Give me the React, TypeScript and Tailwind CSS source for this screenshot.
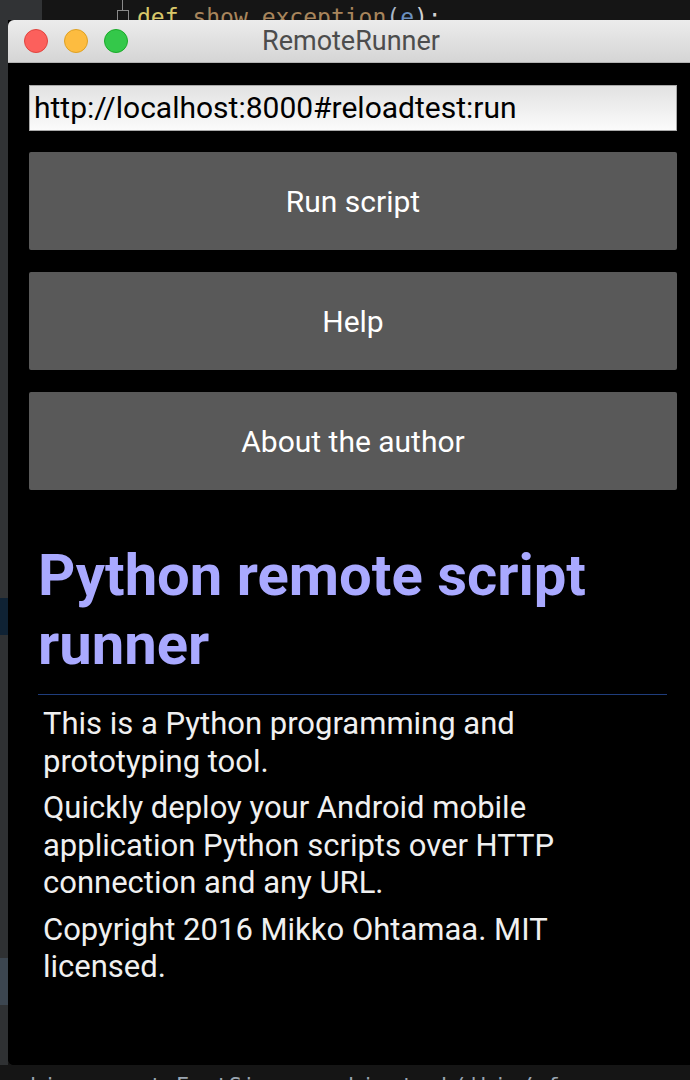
import React from "react";

const paragraphs = [
  "This is a Python programming and prototyping tool.",
  "Quickly deploy your Android mobile application Python scripts over HTTP connection and any URL.",
  "Copyright 2016 Mikko Ohtamaa. MIT licensed.",
];

const buttons = ["Run script", "Help", "About the author"];

function TitleBar() {
  return (
    <div className="relative h-[43px] shrink-0 rounded-t-[6px] border-b border-[#b4b4b4] bg-gradient-to-b from-[#ececec] to-[#d5d5d5] flex items-center">
      <div className="flex items-center gap-[16px] pl-[16px]">
        <span className="block w-[24px] h-[24px] rounded-full bg-[#fc605c] border border-[#e0443e]" />
        <span className="block w-[24px] h-[24px] rounded-full bg-[#fdbc40] border border-[#dea123]" />
        <span className="block w-[24px] h-[24px] rounded-full bg-[#34c84a] border border-[#1aab29]" />
      </div>
      <div className="absolute inset-0 flex items-center justify-center pr-[4px] text-[27px] text-[#4d4d4d] font-['Roboto',sans-serif]">
        RemoteRunner
      </div>
    </div>
  );
}

function RunnerContent() {
  return (
    <div className="flex-1 bg-black pt-[22px] pl-[21px] font-['Roboto',sans-serif]">
      <div className="w-[648px] h-[46px] border border-[#a9a9a9] bg-gradient-to-b from-[#e2e2e2] to-[#fbfbfb] pl-[4px] flex items-center text-[30px] text-black leading-none">
        http://localhost:8000#reloadtest:run
      </div>
      <div className="mt-[21px] flex flex-col gap-[22px] w-[648px]">
        {buttons.map((b) => (
          <div
            key={b}
            className="h-[98px] rounded-[2px] bg-[#595959] flex items-center justify-center text-[30px] text-white"
          >
            {b}
          </div>
        ))}
      </div>
      <h1 className="mt-[51px] ml-[9px] w-[620px] text-[58px] leading-[69px] font-bold text-[#a9a9ff]">
        Python remote script runner
      </h1>
      <div className="mt-[15px] ml-[9px] w-[629px] h-px bg-[#1f3d7c]" />
      <div className="mt-[10px] ml-[14px] w-[590px] flex flex-col gap-[9px]">
        {paragraphs.map((p) => (
          <p key={p} className="text-[31px] leading-[37.5px] text-[#f0f0f0]">
            {p}
          </p>
        ))}
      </div>
    </div>
  );
}

export default function App() {
  return (
    <div className="w-[690px] h-[1080px] overflow-hidden bg-[#151515] flex flex-col">
      {/* editor line above the window */}
      <div className="h-[20px] shrink-0 flex overflow-hidden">
        <div className="w-[42px] bg-[#313335]" />
        <div className="relative flex-1">
          <div className="absolute left-[80px] top-0 w-px h-[10px] bg-[#8a8a8a]" />
          <div className="absolute left-[75px] top-[10px] w-[12px] h-[12px] border border-[#8a8a8a]" />
          <div className="pl-[95px] pt-[3px] font-['DejaVu_Sans_Mono',monospace] text-[23px] leading-[28px] whitespace-pre">
            <span className="text-[#d8c76a]">def</span>{" "}
            <span className="text-[#a8855c]">show_exception</span>
            <span className="text-[#a9b7c6]">(</span>
            <span className="text-[#6a8fbf]">e</span>
            <span className="text-[#d0d0d0]">):</span>
          </div>
        </div>
      </div>

      {/* window row */}
      <div className="flex h-[1045px] shrink-0">
        <div className="w-[8px] shrink-0 flex flex-col">
          <div className="h-[578px] bg-[#313335]" />
          <div className="h-[37px] bg-[#0f2234]" />
          <div className="h-[323px] bg-[#2f3133]" />
          <div className="h-[47px] bg-[#3c4650]" />
          <div className="flex-1 bg-[#2f3133]" />
        </div>
        <div className="w-[690px] shrink-0 flex flex-col rounded-b-[6px] overflow-hidden bg-black">
          <TitleBar />
          <RunnerContent />
        </div>
      </div>

      {/* editor line below the window */}
      <div className="flex-1 overflow-hidden pl-[30px] pt-[8px] font-['DejaVu_Sans_Mono',monospace] text-[22px] leading-[26px] text-[#9aa5b1] whitespace-pre">
        bin = root.FontSize     binstack('bin/ f
      </div>
    </div>
  );
}
